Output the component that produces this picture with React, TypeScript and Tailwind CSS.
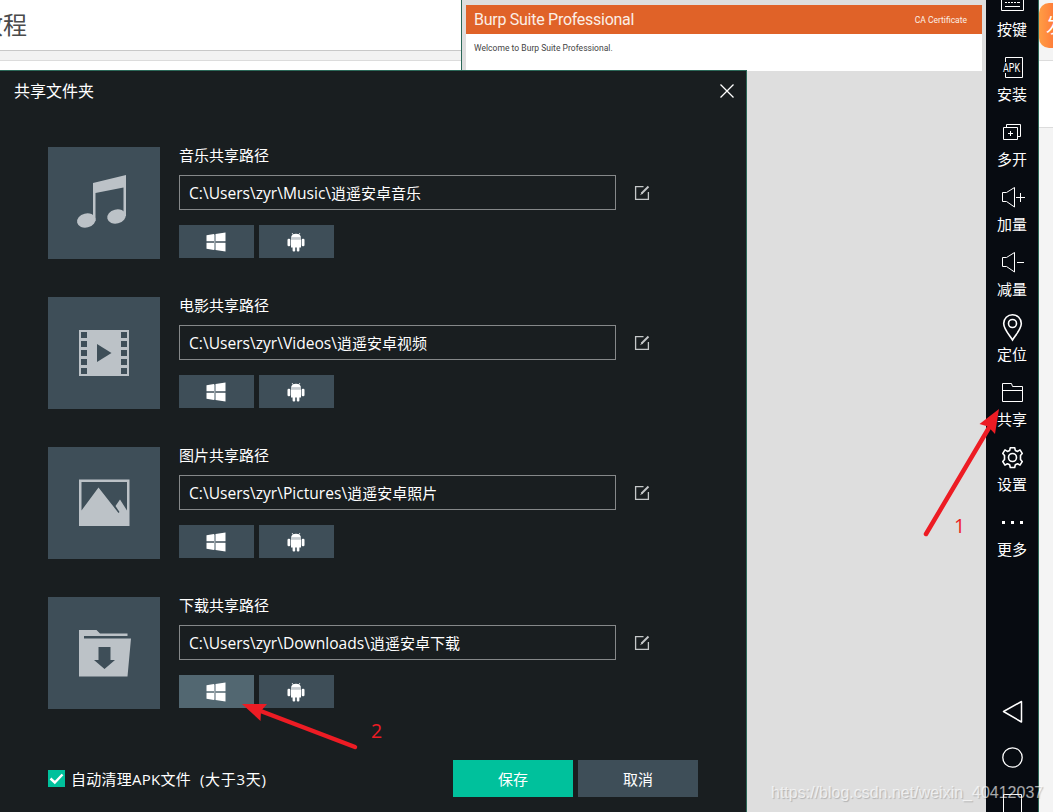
import type { ReactNode } from 'react';

interface ShareFolder {
  id: string;
  label: string;
  path: string;
  folder: string;
  icon: ReactNode;
  active?: boolean;
}

interface ToolItem {
  label: string;
  icon: ReactNode;
}

const MusicIcon = () => (
  <svg width="112" height="112" viewBox="0 0 112 112" fill="#bcc2c7">
    <path d="M45 36 L78 28 V69 H75.500 V40.500 L47.500 46 V74 H45 Z" />
    <ellipse cx="38.300" cy="73.500" rx="9.400" ry="7" transform="rotate(-14 38.300 73.500)" />
    <ellipse cx="68.500" cy="69.500" rx="9.400" ry="7" transform="rotate(-14 68.500 69.500)" />
  </svg>
);

const MovieIcon = () => (
  <svg width="112" height="112" viewBox="0 0 112 112">
    <path d="M31 33H81V79H31Z" fill="#bcc2c7" />
    {[35, 44, 53, 62, 71].map((y) => (
      <g key={y} fill="#3e4e58">
        <rect x="33" y={y} width="6" height="6" />
        <rect x="73" y={y} width="6" height="6" />
      </g>
    ))}
    <path d="M49 47L63.500 56L49 65Z" fill="#3e4e58" />
  </svg>
);

const PictureIcon = () => (
  <svg width="112" height="112" viewBox="0 0 112 112" fill="#bcc2c7">
    <path d="M31 32.500H81.500V79H31Z M33.500 35V63.500L50.500 40.500L70.500 66L71.500 65L67.500 59L72 52.500L79 63.500V35Z" fillRule="evenodd" />
  </svg>
);

const DownloadIcon = () => (
  <svg width="112" height="112" viewBox="0 0 112 112">
    <path d="M31 33H48.500L52 36.500H79.500V39H36V41.500H83L79.500 79.500H31Z" fill="#bcc2c7" />
    <path d="M50.500 50H62.500V63H67L56.500 72L46 63H50.500Z" fill="#3e4e58" />
  </svg>
);

const WindowsIcon = () => (
  <svg width="20" height="20" viewBox="0 0 20 20" fill="#fff">
    <path d="M0.500 3.200L8 2.100V9.200H0.500Z M9.500 1.900L19.500 0.500V9.200H9.500Z M0.500 10.800H8V17.900L0.500 16.800Z M9.500 10.800H19.500V19.500L9.500 18.100Z" />
    <path d="M8 2.500H9.500V17.700H8Z" fill="#a3adb3" />
  </svg>
);

const AndroidIcon = () => (
  <svg width="18" height="20" viewBox="0 0 18 20" fill="#fff">
    <path d="M5 1L6.500 3M13 1L11.500 3" stroke="#fff" strokeWidth="0.800" />
    <path d="M4 5.800C4.200 3.200 6 1.700 9 1.700S13.800 3.200 14 5.800Z" />
    <path d="M4 5.800H14V7.300H4Z" fill="#c5cbcf" />
    <path d="M4 7.300H14V15.500H4Z" />
    <rect x="0.500" y="6.800" width="2.800" height="7.500" rx="1.200" />
    <rect x="14.700" y="6.800" width="2.800" height="7.500" rx="1.200" />
    <rect x="5.600" y="14" width="2.600" height="5.500" rx="1" />
    <rect x="9.800" y="14" width="2.600" height="5.500" rx="1" />
  </svg>
);

const EditIcon = () => (
  <svg width="16" height="16" viewBox="0 0 16 16" fill="none" stroke="#c4c7c8" strokeWidth="1.300">
    <path d="M9.500 1.600H1.600V14.400H14.400V7" />
    <path d="M14.500 1.500L7.500 8.500" strokeWidth="2" />
    <path d="M7.800 7.200L6 10.200L9 8.400Z" fill="#c4c7c8" stroke="none" />
  </svg>
);

const ToolIcon = ({ children }: { children: ReactNode }) => (
  <svg className="shrink-0" width="30" height="30" viewBox="0 0 30 30" fill="none" stroke="#fff" strokeWidth="1">
    {children}
  </svg>
);

const FOLDERS: ShareFolder[] = [
  { id: 'music', label: '音乐共享路径', path: 'C:\\Users\\zyr\\Music\\', folder: '逍遥安卓音乐', icon: <MusicIcon /> },
  { id: 'video', label: '电影共享路径', path: 'C:\\Users\\zyr\\Videos\\', folder: '逍遥安卓视频', icon: <MovieIcon /> },
  { id: 'picture', label: '图片共享路径', path: 'C:\\Users\\zyr\\Pictures\\', folder: '逍遥安卓照片', icon: <PictureIcon /> },
  { id: 'download', label: '下载共享路径', path: 'C:\\Users\\zyr\\Downloads\\', folder: '逍遥安卓下载', icon: <DownloadIcon />, active: true },
];

const TOOLS: ToolItem[] = [
  {
    label: '按键',
    icon: <path d="M4.500 8.500H26.500V23.500H4.500Z M8 19.500H23 M8 15.500H10 M11 15.500H13 M14 15.500H16 M17 15.500H19 M20 15.500H23" />,
  },
  {
    label: '安装',
    icon: (
      <>
        <path d="M8.500 10V5.500H25.500V25.500H8.500V21" />
        <text x="6" y="20" fontSize="12" textLength="17" lengthAdjust="spacingAndGlyphs" fill="#fff" stroke="none" fontFamily="Roboto, sans-serif">
          APK
        </text>
      </>
    ),
  },
  {
    label: '多开',
    icon: <path d="M6.500 10.500H20.500V22.500H6.500Z M9.500 10V7.500H23.500V19.500H21 M11 16.500H16 M13.500 14V19" />,
  },
  {
    label: '加量',
    icon: <path d="M5.500 10.500H9.500L17.500 5.500V25L9.500 19.500H5.500Z M19 15.500H28 M23.500 11V20" />,
  },
  {
    label: '减量',
    icon: <path d="M5.500 10.500H9.500L17.500 5.500V25L9.500 19.500H5.500Z M20 15.500H27" />,
  },
  {
    label: '定位',
    icon: (
      <g strokeWidth="1.600">
        <path d="M15.500 28C12 22.500 6.700 17 6.700 11.500A8.800 8.800 0 0 1 24.300 11.500C24.300 17 19 22.500 15.500 28Z" />
        <circle cx="15.500" cy="11.500" r="4" />
      </g>
    ),
  },
  {
    label: '共享',
    icon: <path d="M5.500 24.500V6.500H14.500L15.500 9.500H25.500V24.500Z M5.500 13.500H25.500" />,
  },
  {
    label: '设置',
    icon: (
      <g strokeWidth="1.600" strokeLinejoin="round">
        <path d="M13.300 5.700H17.700L18.300 8.400L20.600 9.400L23 7.900L25.200 11.400L23.500 13.500V17.500L25.200 19.600L23 23.100L20.600 21.800L18.300 22.800L17.700 25.500H13.300L12.700 22.800L10.400 21.800L8 23.100L5.800 19.600L7.500 17.500V13.500L5.800 11.400L8 7.900L10.400 9.400L12.700 8.400Z" />
        <circle cx="15.500" cy="15.500" r="4" />
      </g>
    ),
  },
  {
    label: '更多',
    icon: <path d="M5 14H8V17H5Z M14 14H17V17H14Z M23 14H26V17H23Z" fill="#fff" stroke="none" />,
  },
];

function FolderRow({ item }: { item: ShareFolder }) {
  return (
    <div className="flex h-[112px]">
      <div className="h-[112px] w-[112px] shrink-0 bg-[#3e4e58]">{item.icon}</div>
      <div className="ml-[19px] w-[437px]">
        <div className="flex h-[17px] items-center text-[15px] leading-none whitespace-nowrap">{item.label}</div>
        <div className="mt-[11px] flex h-[35px] items-center border border-[#858889] pt-px pl-[9px] text-[15px] whitespace-nowrap">
          <span className="pt-[2px] text-[15.6px]">{item.path}</span>
          <span>{item.folder}</span>
        </div>
        <div className="mt-[15px] flex gap-[5px]">
          <button
            type="button"
            className={
              item.active
                ? 'flex h-[33px] w-[75px] items-center justify-center bg-[#526771] pr-px'
                : 'flex h-[33px] w-[75px] items-center justify-center bg-[#3e4e58] pr-px'
            }
          >
            <WindowsIcon />
          </button>
          <button type="button" className="flex h-[33px] w-[75px] items-center justify-center bg-[#3e4e58] pr-px">
            <AndroidIcon />
          </button>
        </div>
      </div>
      <div className="mt-[38px] ml-[18px]">
        <EditIcon />
      </div>
    </div>
  );
}

function ShareDialog() {
  return (
    <div className="absolute top-[70px] left-0 flex h-[742px] w-[747px] flex-col border-t border-r border-[#2b6858] bg-[#191e20] text-white">
      <div className="flex h-10 items-center justify-between pr-3 pl-[14px]">
        <h1 className="text-[16px] leading-none">共享文件夹</h1>
        <svg width="14" height="14" viewBox="0 0 14 14" stroke="#fff" strokeWidth="1.300">
          <path d="M0.500 0.500L13.500 13.500M13.500 0.500L0.500 13.500" />
        </svg>
      </div>
      <div className="mt-[36px] flex flex-col gap-[38px] pl-12">
        {FOLDERS.map((item) => (
          <FolderRow key={item.id} item={item} />
        ))}
      </div>
      <div className="mt-[51px] flex h-[37px] items-center pl-12 text-[15px]">
        <span className="flex h-[17px] w-[17px] items-center justify-center bg-[#00c19c]">
          <svg width="17" height="17" viewBox="0 0 17 17" fill="none" stroke="#fff" strokeWidth="2.400">
            <path d="M2.500 8.500L6.800 12.500L14.500 4.500" />
          </svg>
        </span>
        <span className="ml-[6px] flex w-[382px] pt-px whitespace-nowrap">
          <span className="tracking-[0.25px]">自动清理APK文件</span>
          <span className="ml-[9px] tracking-[0.7px]">(大于3天)</span>
        </span>
        <button type="button" className="h-[37px] w-[120px] bg-[#00c19c] pt-px">
          保存
        </button>
        <button type="button" className="ml-[5px] h-[37px] w-[120px] bg-[#3e4e58] pt-px">
          取消
        </button>
      </div>
    </div>
  );
}

function Toolbar() {
  return (
    <div className="flex h-full w-[53px] shrink-0 flex-col items-center overflow-hidden border-r border-[#2b6858] bg-[#070b11] text-white">
      <div className="-mt-[13px] flex flex-col">
        {TOOLS.map((tool) => (
          <div key={tool.label} className="flex h-[65px] flex-col items-center">
            <ToolIcon>{tool.icon}</ToolIcon>
            <span className="mt-[2px] flex h-5 items-center text-[15px] leading-none">{tool.label}</span>
          </div>
        ))}
      </div>
      <div className="mt-[125px] flex flex-col gap-4">
        <ToolIcon>
          <path d="M6.500 14.500L24.500 4.500V25Z" strokeWidth="1.500" strokeLinejoin="round" />
        </ToolIcon>
        <ToolIcon>
          <circle cx="15.500" cy="14.500" r="9.700" strokeWidth="1.300" />
        </ToolIcon>
        <ToolIcon>
          <path d="M6.500 5.500H24.500V24.500H6.500Z" />
        </ToolIcon>
      </div>
    </div>
  );
}

export default function App() {
  return (
    <div className="relative flex h-[812px] w-[1053px] overflow-hidden bg-white font-['Open_Sans','Noto_Sans_CJK_SC',sans-serif]">
      <div className="h-full w-[461px] shrink-0">
        <div className="flex h-[51px] items-center overflow-hidden border-b border-[#c8c8c8] pb-px">
          <span className="-ml-[21px] text-[24px] leading-none whitespace-nowrap text-[#4a4a4a]">教程</span>
        </div>
        <div className="h-[10px] border-b border-[#dcdcdc] bg-[#f2f2f2]" />
      </div>

      <div className="h-full w-[525px] shrink-0 border-l border-[#2b6858] bg-[#dedede] pt-[5px] pl-1 font-['Roboto',sans-serif]">
        <div className="h-[66px] w-[516px] bg-white">
          <div className="flex h-[29px] items-center justify-between bg-[#e06228] pr-[15px] pl-2 text-[#fbeee6]">
            <span className="text-[16px] tracking-[-0.27px]">Burp Suite Professional</span>
            <span className="pt-px text-[8.5px]">CA Certificate</span>
          </div>
          <p className="mt-[8px] ml-2 text-[8.5px] leading-3 tracking-[0.03px] text-[#444]">Welcome to Burp Suite Professional.</p>
        </div>
      </div>

      <Toolbar />

      <div className="h-full w-[14px] shrink-0 overflow-hidden bg-[#f4f4f4]">
        <div className="h-[61px] border-b border-[#dcdcdc] pt-[3px]">
          <div className="flex h-[45px] w-[90px] items-center rounded-l-[10px] bg-linear-to-r from-[#ff9d45] from-0% to-[#ff6a33] to-25% pl-[7px] text-[20px] leading-none text-white">
            发布
          </div>
        </div>
        <div className="h-[67px] border-b border-[#dcdcdc] bg-white" />
      </div>

      <ShareDialog />

      {/* step markers */}
      <svg className="absolute inset-0" width="1053" height="812" viewBox="0 0 1053 812" fill="#ed1c24">
        <path d="M926 534L990 426" stroke="#ed1c24" strokeWidth="4.500" strokeLinecap="round" />
        <path d="M999 409L979.500 424L988 426.500L995 434Z" />
        <path d="M355 747L258 710" stroke="#ed1c24" strokeWidth="4.500" strokeLinecap="round" />
        <path d="M242 704L267 704L261 711L260.500 721Z" />
      </svg>
      <span className="absolute top-[513px] left-[954px] text-[19.5px] leading-[26px] text-[#ed1c24]">1</span>
      <span className="absolute top-[718px] left-[371px] text-[19.5px] leading-[26px] text-[#ed1c24]">2</span>

      <span className="absolute top-[783px] left-[771px] font-['Liberation_Sans',sans-serif] text-[16px] leading-5 whitespace-nowrap text-white/65 [text-shadow:1px_1px_1px_rgba(0,0,0,0.2)]">
        https://blog.csdn.net/weixin_40412037
      </span>
    </div>
  );
}
